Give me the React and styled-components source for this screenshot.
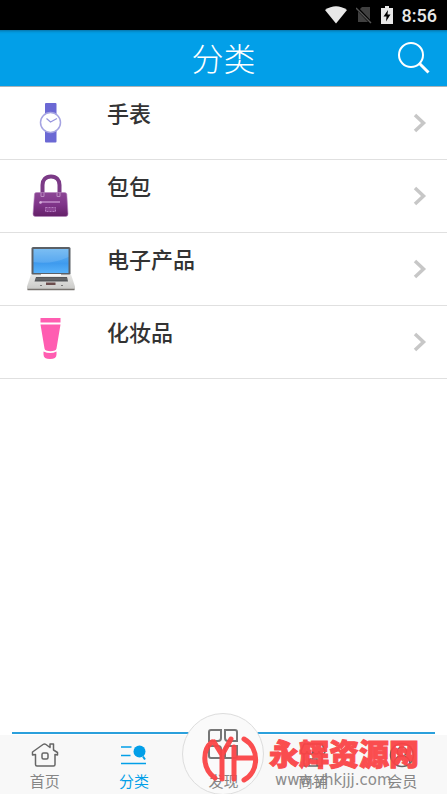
import React from 'react';
import styled, { createGlobalStyle, ThemeProvider } from 'styled-components';

const theme = {
    color: {
        blue: '#029fe8',
        text: '#333333',
        gray: '#868686',
        line: '#e0e0e0',
        bar: '#f8f8f8',
        red: '#fb4446',
    },
    fontSize: {
        sm: '15px',
        md: '18px',
        lg: '22px',
        xl: '32px',
    },
};

const WatchIcon = () => (
    <svg width="50" height="50" viewBox="0 0 50 50" aria-hidden="true">
        <rect x="20" y="5" width="11.5" height="39.5" rx="1" fill="#6b68d4" />
        <circle cx="25.5" cy="24.5" r="10" fill="#fff" stroke="#a5a3e2" strokeWidth="1.5" />
        <path d="M21.5 20.5l4 3.5 6.5-3.5" fill="none" stroke="#9895dd" strokeWidth="1.2" />
    </svg>
);

const BagIcon = () => (
    <svg width="50" height="50" viewBox="0 0 50 50" aria-hidden="true">
        <defs>
            <linearGradient id="bag" x1="0" y1="0" x2="0" y2="1">
                <stop offset="0" stopColor="#8c4795" />
                <stop offset=".5" stopColor="#7f3489" />
                <stop offset="1" stopColor="#642068" />
            </linearGradient>
        </defs>
        <path d="M17.5 26V14c0-5 3-8.500 8.500-8.500s8.500 3.500 8.500 8.500v12" fill="none" stroke="#7b3a86" strokeWidth="4" />
        <path d="M9.500 23q0-1.500 2-1.500h28q2 0 2.300 1.500l1.200 20q0 2.500-2.500 2.500h-30q-2.500 0-2.500-2.500z" fill="url(#bag)" stroke="#b684bd" strokeWidth=".6" />
        <path d="M16 21.500v4h3v-4M32 21.500v4h3v-4" fill="none" stroke="#b98ac0" />
        <path d="M15 31h20" stroke="#c08cc8" strokeWidth="1.500" />
        <circle cx="15.500" cy="31.500" r="1.300" fill="#dbb5df" />
        <rect x="20.500" y="36.500" width="10" height="4" fill="#8b4394" stroke="#b57cc0" strokeDasharray="2 1" />
    </svg>
);

const LaptopIcon = () => (
    <svg width="50" height="50" viewBox="0 0 50 50" aria-hidden="true">
        <defs>
            <linearGradient id="screen" x1="0" y1="0" x2="0" y2="1">
                <stop offset="0" stopColor="#69b5f2" />
                <stop offset=".6" stopColor="#3f9bee" />
                <stop offset="1" stopColor="#58b2fa" />
            </linearGradient>
            <linearGradient id="deck" x1="0" y1="0" x2="0" y2="1">
                <stop offset="0" stopColor="#e8e8e6" />
                <stop offset="1" stopColor="#c9c9c7" />
            </linearGradient>
        </defs>
        <rect x="6.500" y="3" width="39" height="28" rx="1.500" fill="#5b6066" />
        <rect x="8.500" y="5" width="35" height="24" fill="url(#screen)" />
        <path d="M8.500 18q18 3 35-5v-8h-35z" fill="#fff" opacity=".12" />
        <path d="M6 30.500h40l4 12v3h-48v-3z" fill="url(#deck)" />
        <path d="M16 30h20v2h-20z" fill="#f6f6f6" />
        <path d="M11 33h31l1 4.500h-33.500z" fill="#55575a" />
        <path d="M10.500 35h32" stroke="#888" strokeWidth=".6" />
        <rect x="21" y="38.500" width="9.500" height="2.500" fill="#6b4c4c" />
        <path d="M15 41.500h2M36 41.500h2" stroke="#777" />
        <path d="M2.500 45.500h47" stroke="#77736f" strokeWidth="1.500" />
    </svg>
);

const TubeIcon = () => (
    <svg width="50" height="50" viewBox="0 0 50 50" aria-hidden="true">
        <g fill="#ff5db1">
            <path d="M15.500 1h20v4.500h-20z" />
            <path d="M15.500 7.500h20l-4 24q-.2 1.500-1.700 2-4.300 1.500-8.600 0-1.500-.5-1.700-2z" />
            <path d="M18.500 34.500q7 3 13 0v3q0 4.500-6.500 4.500t-6.500-4.500z" />
        </g>
    </svg>
);

const ArrowIcon = () => (
    <svg width="14" height="20" viewBox="0 0 14 20" aria-hidden="true">
        <path d="M2 2l8.500 8-8.500 8" fill="none" stroke="#c7c7c7" strokeWidth="3.500" />
    </svg>
);

const SearchIcon = () => (
    <svg width="34" height="34" viewBox="0 0 34 34" fill="none" stroke="#fff" aria-hidden="true">
        <circle cx="14" cy="14" r="12" strokeWidth="2" />
        <path d="M22.500 22.500l9 9" strokeWidth="3" />
    </svg>
);

const WifiIcon = () => (
    <svg width="22" height="18" viewBox="0 0 22 18" aria-hidden="true">
        <path d="M0 4Q11-3.500 22 4L11 17.500z" fill="#e8e8e8" />
    </svg>
);

const NoSimIcon = () => (
    <svg width="16" height="18" viewBox="0 0 16 18" aria-hidden="true">
        <path d="M6 1h8v15h-12v-11z" fill="#404040" />
        <path d="M0 1l15 16" stroke="#000" strokeWidth="3" />
        <path d="M0 2l15 15" stroke="#555" strokeWidth="1.500" />
    </svg>
);

const BatteryIcon = () => (
    <svg width="12" height="18" viewBox="0 0 12 18" aria-hidden="true">
        <path d="M4 0h4v2h4v16h-12v-16h4z" fill="#e8e8e8" />
        <path d="M7 4l-4.500 6.500h3l-.5 5 4.500-7h-3z" fill="#000" />
    </svg>
);

const HomeIcon = () => (
    <svg width="28" height="26" viewBox="0 0 28 26" fill="none" stroke="#666" strokeWidth="1.500" strokeLinejoin="round" aria-hidden="true">
        <path d="M4.500 12.500l-3 .5v-3L12 2.500q1.500-1 3 0l4 3V2h3.500v6l4 2.500v2.500l-2.500-.5v10q0 1.500-1.500 1.500H6q-1.500 0-1.500-1.500z" />
        <rect x="11" y="11" width="6" height="6" rx="1.500" />
    </svg>
);

const SortIcon = () => (
    <svg width="28" height="26" viewBox="0 0 28 26" fill="none" stroke="#029fe8" aria-hidden="true">
        <path d="M1 5h10.500M1 13.500h9.500M1 21.500h25" strokeWidth="1.500" />
        <circle cx="19.500" cy="9.500" r="6" fill="#029fe8" stroke="none" />
        <path d="M23 14.500l2 3" strokeWidth="2" />
    </svg>
);

const FindIcon = () => (
    <svg width="32" height="32" viewBox="0 0 32 32" fill="none" stroke="#777" strokeWidth="2" aria-hidden="true">
        <path d="M4 2h10v8q0 3-3 3h-9v-9q0-2 2-2zM18 2h10q2 0 2 2v9h-9q-3 0-3-3zM2 18h9q3 0 3 3v9h-10q-2 0-2-2zM21 18h9v10q0 2-2 2h-10v-9q0-3 3-3z" />
    </svg>
);

const ShopIcon = () => (
    <svg width="28" height="26" viewBox="0 0 28 26" fill="none" stroke="#666" strokeWidth="1.500" aria-hidden="true">
        <path d="M5 2h18l3 7q0 3-3 3t-3-3q0 3-3 3t-3-3q0 3-3 3t-3-3q0 3-3 3t-3-3zM5 12v12h18v-12M10 24v-7h8v7" />
    </svg>
);

const MemberIcon = () => (
    <svg width="28" height="26" viewBox="0 0 28 26" fill="none" stroke="#666" strokeWidth="1.500" aria-hidden="true">
        <circle cx="14" cy="13" r="11.500" />
        <circle cx="14" cy="9.500" r="4.500" />
        <path d="M6 21q1-7 8-7t8 7" />
    </svg>
);

const StampLogo = () => (
    <svg width="58" height="50" viewBox="0 0 58 50" fill="none" stroke="#fb4446" strokeWidth="5" strokeLinecap="round" aria-hidden="true">
        <path d="M11 8C1 16 1 35 14 44M43 5C59 14 58 38 43 46" />
        <path d="M13 8l8 13v24M30 5l-9 16M33 13v32M33 24h21" />
    </svg>
);

const categories = [
    { name: '手表', Icon: WatchIcon },
    { name: '包包', Icon: BagIcon },
    { name: '电子产品', Icon: LaptopIcon },
    { name: '化妆品', Icon: TubeIcon },
];

const tabs = [
    { name: '首页', Icon: HomeIcon },
    { name: '分类', Icon: SortIcon, active: true },
    { name: '发现', Icon: FindIcon, raised: true },
    { name: '商铺', Icon: ShopIcon },
    { name: '会员', Icon: MemberIcon },
];

const App = () => {
    return (
        <ThemeProvider theme={theme}>
            <GlobalStyle />
            <PageStyled>
                <StatusBar>
                    <WifiIcon />
                    <NoSimIcon />
                    <BatteryIcon />
                    <Clock>8:56</Clock>
                </StatusBar>
                <Header>
                    <Title>分类</Title>
                    <SearchButton aria-label="搜索"><SearchIcon /></SearchButton>
                </Header>
                <CategoryList>
                    {categories.map(({ name, Icon }) => (
                        <li key={name}>
                            <CategoryLink href="#">
                                <Icon />
                                <CategoryName>{name}</CategoryName>
                                <ArrowIcon />
                            </CategoryLink>
                        </li>
                    ))}
                </CategoryList>
                <TabBar>
                    {tabs.map(({ name, Icon, active, raised }) => (
                        <TabLink href="#" key={name} $active={active} $raised={raised}>
                            {raised && <TabCircle />}
                            <Icon />
                            <TabLabel>{name}</TabLabel>
                        </TabLink>
                    ))}
                    <Watermark>
                        <StampLogo />
                        <WatermarkText>
                            <SiteName>永辉资源网</SiteName>
                            <SiteUrl>www.yhkjjj.com</SiteUrl>
                        </WatermarkText>
                    </Watermark>
                </TabBar>
            </PageStyled>
        </ThemeProvider>
    );
};

export default App;

const GlobalStyle = createGlobalStyle`
* {
    box-sizing: border-box;
}
body {
    margin: 0;
    background: #fff;
    font-family: Roboto, 'Noto Sans CJK SC', sans-serif;
}
`

const PageStyled = styled.div`
    display: flex;
    flex-direction: column;
    min-height: 100vh;
    overflow: hidden;
`

const StatusBar = styled.div`
    display: flex;
    align-items: center;
    justify-content: flex-end;
    gap: 9px;
    height: 30px;
    padding: 0 10px;
    background: #000;
`

const Clock = styled.span`
    color: #e8e8e8;
    font-size: ${({ theme }) => theme.fontSize.md};
    font-weight: 500;
`

const Header = styled.header`
    display: grid;
    grid-template-columns: 50px 1fr 50px;
    align-items: center;
    height: 57px;
    padding: 0 8px;
    background: ${({ theme }) => theme.color.blue};
    border-bottom: 1px solid #a9b3b8;
    box-shadow: inset 0 4px 3px -3px #0a6c9c;
`

const Title = styled.h1`
    grid-column: 2;
    margin: 0;
    color: #fff;
    font-family: 'Noto Sans CJK SC', sans-serif;
    font-size: ${({ theme }) => theme.fontSize.xl};
    font-weight: 300;
    line-height: 54px;
    text-align: center;
    align-self: start;
`

const SearchButton = styled.button`
    display: flex;
    justify-content: center;
    padding: 0;
    border: 0;
    background: none;
`

const CategoryList = styled.ul`
    flex: 1;
    margin: 0;
    padding: 0;
    list-style: none;
`

const CategoryLink = styled.a`
    display: flex;
    align-items: center;
    gap: 32px;
    height: 73px;
    padding: 0 20px 0 25px;
    border-bottom: 1px solid ${({ theme }) => theme.color.line};
    text-decoration: none;
`

const CategoryName = styled.span`
    flex: 1;
    align-self: flex-start;
    padding-top: 12px;
    color: ${({ theme }) => theme.color.text};
    font-size: ${({ theme }) => theme.fontSize.lg};
    font-weight: 500;
    line-height: 32px;
`

const TabBar = styled.nav`
    position: relative;
    display: grid;
    grid-template-columns: repeat(5, 1fr);
    grid-template-rows: 59px;
    background: ${({ theme }) => theme.color.bar};

    &::before {
        content: '';
        position: absolute;
        top: -3px;
        left: 12px;
        right: 12px;
        height: 2px;
        background: #2ba0dc;
    }
`

const TabLink = styled.a`
    position: relative;
    display: flex;
    flex-direction: column;
    align-items: center;
    justify-content: flex-end;
    gap: ${({ $raised }) => ($raised ? '10px' : '2px')};
    color: ${({ theme, $active }) => ($active ? theme.color.blue : theme.color.gray)};
    text-decoration: none;

    svg {
        position: relative;
        flex-shrink: 0;
    }
`

const TabCircle = styled.span`
    position: absolute;
    top: -22px;
    left: 50%;
    width: 82px;
    height: 82px;
    margin-left: -41px;
    border: 1px solid #ddd;
    border-radius: 50%;
    background: #fafafa;
`

const TabLabel = styled.span`
    position: relative;
    font-size: ${({ theme }) => theme.fontSize.sm};
    line-height: 24px;
`

const Watermark = styled.div`
    position: absolute;
    right: 28px;
    bottom: 6px;
    display: flex;
    align-items: flex-start;
    gap: 10px;
    pointer-events: none;
    opacity: 0.95;
`

const WatermarkText = styled.div`
    display: flex;
    flex-direction: column;
    padding-top: 4px;
`

const SiteName = styled.strong`
    color: ${({ theme }) => theme.color.red};
    font-size: 30px;
    font-weight: 900;
    line-height: 34px;
    -webkit-text-stroke: 1px ${({ theme }) => theme.color.red};
`

const SiteUrl = styled.span`
    padding-left: 6px;
    color: ${({ theme }) => theme.color.gray};
    font-family: 'DejaVu Sans', sans-serif;
    font-size: ${({ theme }) => theme.fontSize.sm};
    line-height: 16px;
`
